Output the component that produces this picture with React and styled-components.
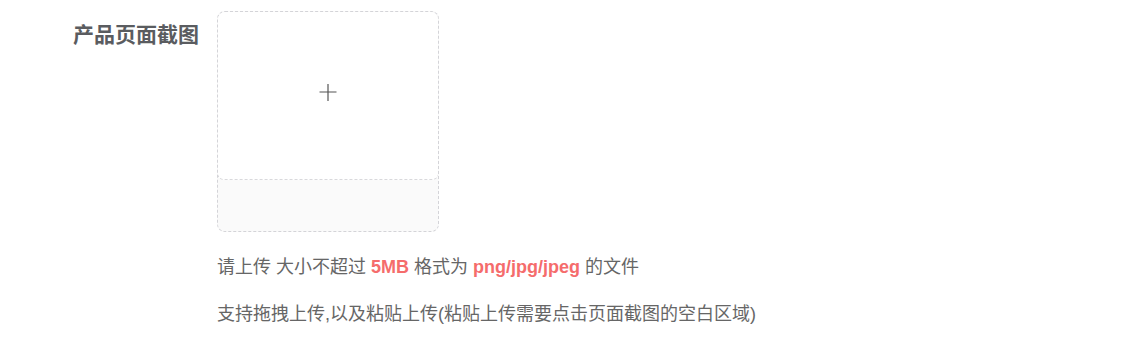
import React from "react";
import styled, { createGlobalStyle } from "styled-components";

const Global = createGlobalStyle`
  html, body { margin: 0; padding: 0; background: #fff; }
  body { font-family: "Liberation Sans", "Noto Sans CJK SC", sans-serif; }
`;

const Page = styled.div`
  width: 1146px;
  height: 358px;
  box-sizing: border-box;
  padding-top: 11px;
`;

const FormRow = styled.div`
  display: flex;
  align-items: flex-start;
`;

const Label = styled.div`
  width: 217px;
  box-sizing: border-box;
  padding-right: 18px;
  text-align: right;
  font-size: 21px;
  line-height: 48px;
  font-weight: 700;
  color: #5a5c60;
  font-family: "Liberation Sans", "Noto Sans CJK SC", sans-serif;
`;

const Content = styled.div`
  display: flex;
  flex-direction: column;
`;

const Uploader = styled.div`
  width: 222px;
  height: 221px;
  box-sizing: border-box;
  border: 1px dashed #d4d4d8;
  border-radius: 8px;
  background: #fafafa;
  overflow: hidden;
  cursor: pointer;
`;

const DropArea = styled.div`
  height: 169px;
  box-sizing: border-box;
  margin: -1px -1px 0;
  border: 1px dashed #d9d9dc;
  border-radius: 7px;
  background: #fff;
  display: flex;
  align-items: center;
  justify-content: center;
  padding-bottom: 7px;
`;

const Hint = styled.p`
  margin: ${(p) => p.$mt}px 0 0;
  font-size: 18px;
  line-height: 24px;
  color: #666;
  font-family: "Liberation Sans", "Noto Sans CJK SC", sans-serif;
`;

const Em = styled.span`
  color: #f56c6c;
  font-weight: 700;
`;

const PlusIcon = () => (
  <svg width="18" height="18" viewBox="0 0 18 18" fill="none">
    <path d="M9 1v17M0.5 9h17" stroke="#555" strokeWidth="1.2" />
  </svg>
);

export default function App() {
  return (
    <>
      <Global />
      <Page>
        <FormRow>
          <Label>产品页面截图</Label>
          <Content>
            <Uploader>
              <DropArea>
                <PlusIcon />
              </DropArea>
            </Uploader>
            <Hint $mt={23}>
              请上传 大小不超过 <Em>5MB</Em> 格式为 <Em>png/jpg/jpeg</Em> 的文件
            </Hint>
            <Hint $mt={23}>
              支持拖拽上传,以及粘贴上传(粘贴上传需要点击页面截图的空白区域)
            </Hint>
          </Content>
        </FormRow>
      </Page>
    </>
  );
}
